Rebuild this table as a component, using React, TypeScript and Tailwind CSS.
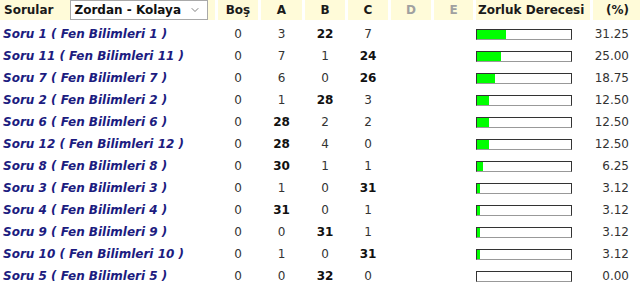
import { ChevronDown } from "lucide-react";

type Row = {
  no: number;
  bos: number;
  a: number;
  b: number;
  c: number;
  key: "a" | "b" | "c";
  pct: number;
};

const ROWS: Row[] = [
  { no: 1, bos: 0, a: 3, b: 22, c: 7, key: "b", pct: 31.25 },
  { no: 11, bos: 0, a: 7, b: 1, c: 24, key: "c", pct: 25.0 },
  { no: 7, bos: 0, a: 6, b: 0, c: 26, key: "c", pct: 18.75 },
  { no: 2, bos: 0, a: 1, b: 28, c: 3, key: "b", pct: 12.5 },
  { no: 6, bos: 0, a: 28, b: 2, c: 2, key: "a", pct: 12.5 },
  { no: 12, bos: 0, a: 28, b: 4, c: 0, key: "a", pct: 12.5 },
  { no: 8, bos: 0, a: 30, b: 1, c: 1, key: "a", pct: 6.25 },
  { no: 3, bos: 0, a: 1, b: 0, c: 31, key: "c", pct: 3.12 },
  { no: 4, bos: 0, a: 31, b: 0, c: 1, key: "a", pct: 3.12 },
  { no: 9, bos: 0, a: 0, b: 31, c: 1, key: "b", pct: 3.12 },
  { no: 10, bos: 0, a: 1, b: 0, c: 31, key: "c", pct: 3.12 },
  { no: 5, bos: 0, a: 0, b: 32, c: 0, key: "b", pct: 0.0 },
];

const COLS = "grid grid-cols-[215px_40px_41px_40px_40px_40px_39px_114px_1fr] gap-x-[3px]";

export default function App() {
  return (
    <div className="w-[640px] h-[287px] bg-white overflow-hidden font-['DejaVu_Sans',Verdana,sans-serif] text-[12px]">
      {/* Header */}
      <div className={`${COLS} h-[20px] mb-[3px]`}>
        <div className="bg-[#fffbd9] flex items-center pl-[4px] gap-[17px] pr-[7px]">
          <span className="font-bold text-[#1a1a1a] text-[12px]">Sorular</span>
          <div className="flex-1 h-[20px] border border-[#a9a9a9] bg-white flex items-center pl-[3px] pr-[6px]">
            <span className="font-bold text-[#111] text-[12px] flex-1">Zordan - Kolaya</span>
            <ChevronDown size={12} strokeWidth={1.5} className="text-[#555]" />
          </div>
        </div>
        <HeadCell>Boş</HeadCell>
        <HeadCell>A</HeadCell>
        <HeadCell>B</HeadCell>
        <HeadCell>C</HeadCell>
        <HeadCell muted>D</HeadCell>
        <HeadCell muted>E</HeadCell>
        <div className="bg-[#fffbd9] flex items-center pl-[2px] font-bold text-[#1a1a1a] whitespace-nowrap">
          Zorluk Derecesi
        </div>
        <div className="bg-[#fffbd9] flex items-center justify-end pr-[11px] font-bold text-[#1a1a1a]">
          (%)
        </div>
      </div>

      {/* Rows */}
      {ROWS.map((r) => (
        <div key={r.no} className={`${COLS} h-[22px] items-center text-[#333]`}>
          <div className="pl-[3px] font-bold italic text-[#1c1c80] text-[12px] whitespace-nowrap">
            Soru {r.no} ( Fen Bilimleri {r.no} )
          </div>
          <div className="text-center">{r.bos}</div>
          <div className={`text-center ${r.key === "a" ? "font-bold text-[#111]" : ""}`}>{r.a}</div>
          <div className={`text-center ${r.key === "b" ? "font-bold text-[#111]" : ""}`}>{r.b}</div>
          <div className={`text-center ${r.key === "c" ? "font-bold text-[#111]" : ""}`}>{r.c}</div>
          <div />
          <div />
          <div className="flex items-center">
            <div className="w-[96px] h-[11px] border border-[#333] border-b-[#999] bg-white">
              <div className="h-full bg-[#00ff00]" style={{ width: `${r.pct}%` }} />
            </div>
          </div>
          <div className="text-right pr-[11px]">{r.pct.toFixed(2)}</div>
        </div>
      ))}
    </div>
  );
}

function HeadCell({ children, muted }: { children: React.ReactNode; muted?: boolean }) {
  return (
    <div
      className={`bg-[#fffbd9] flex items-center justify-center font-bold ${
        muted ? "text-[#a0a0a0]" : "text-[#1a1a1a]"
      }`}
    >
      {children}
    </div>
  );
}
